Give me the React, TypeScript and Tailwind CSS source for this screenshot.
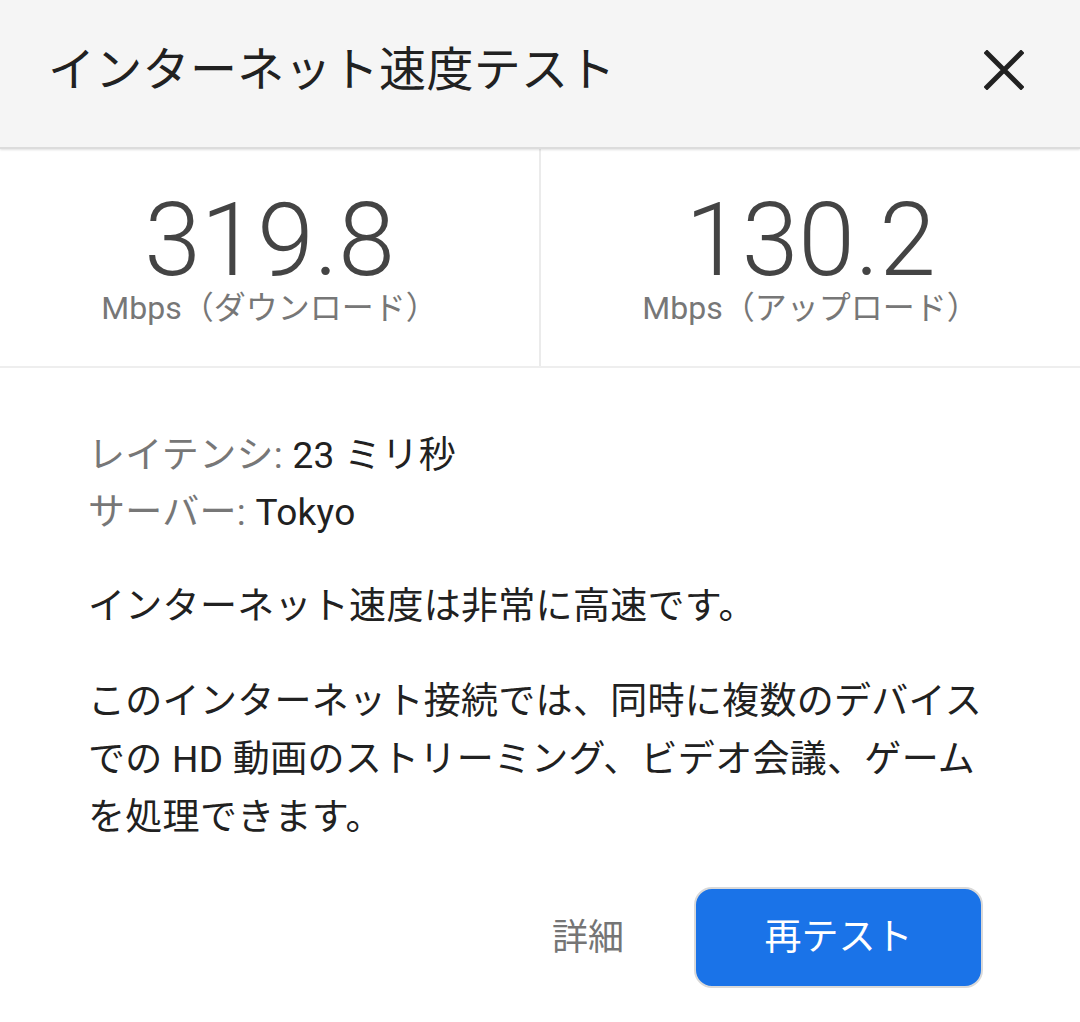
import React from "react";

const font = "font-['Roboto','Noto_Sans_CJK_JP',sans-serif]";

function CloseIcon() {
  return (
    <svg width="40" height="40" viewBox="0 0 40 40" className="shrink-0">
      <path d="M3 3 L37 37 M37 3 L3 37" stroke="#212121" strokeWidth="5" strokeLinecap="square" />
    </svg>
  );
}

function Stat({ value, label }: { value: string; label: string }) {
  return (
    <div className="flex flex-1 flex-col items-center pt-[43px]">
      <div className="text-[102px] font-light leading-[96px] text-[#444444]">{value}</div>
      <div className="text-[32px] leading-[40px] text-[#777777]">{label}</div>
    </div>
  );
}

export default function App() {
  return (
    <div className={`${font} flex h-[1022px] w-[1080px] flex-col overflow-hidden bg-white`}>
      {/* Header */}
      <div className="relative flex h-[149px] shrink-0 items-center justify-between border-b-2 border-[#dcdcdc] bg-[#f5f5f5] pb-[8px] pl-[48px] pr-[56px] shadow-[0_1px_2px_rgba(0,0,0,0.12)]">
        <h1 className="text-[47px] font-normal leading-[60px] tracking-[0.3px] text-[#212121]">インターネット速度テスト</h1>
        <CloseIcon />
      </div>

      {/* Speeds */}
      <div className="flex h-[219px] shrink-0 border-b-2 border-[#eeeeee]">
        <Stat value="319.8" label="Mbps（ダウンロード）" />
        <div className="w-[2px] bg-[#ebebeb]" />
        <Stat value="130.2" label="Mbps（アップロード）" />
      </div>

      {/* Details */}
      <div className="flex flex-col px-[88px] pt-[59px] text-[37px] leading-[57px] tracking-[0.3px] text-[#212121]">
        <div>
          <div>
            <span className="text-[#777777]">レイテンシ:</span> 23 ミリ秒
          </div>
          <div>
            <span className="text-[#777777]">サーバー:</span> Tokyo
          </div>
        </div>
        <p className="mt-[37px]">インターネット速度は非常に高速です。</p>
        <p className="mt-[38px] leading-[58px]">
          このインターネット接続では、同時に複数のデバイスでの HD 動画のストリーミング、ビデオ会議、ゲームを処理できます。
        </p>
      </div>

      {/* Actions */}
      <div className="mt-[40px] flex items-center justify-end gap-[70px] pr-[97px]">
        <button className="text-[36px] leading-[48px] text-[#757575]">詳細</button>
        <button className="flex h-[101px] w-[289px] items-center justify-center rounded-[18px] border-2 border-[#d9d9d9] bg-[#1a73e8] text-[37px] leading-[48px] text-white">
          再テスト
        </button>
      </div>
    </div>
  );
}
